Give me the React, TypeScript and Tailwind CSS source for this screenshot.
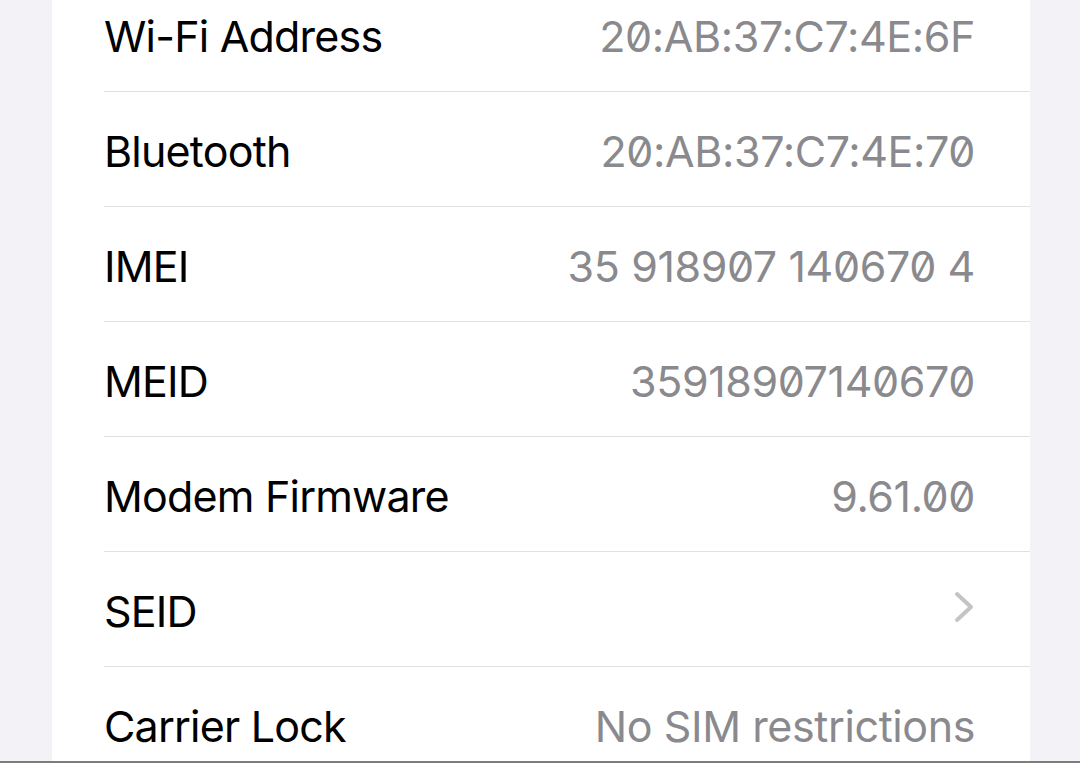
import React from "react";

interface InfoRow {
    label: string;
    value?: string;
    chevron?: boolean;
}

const rows: InfoRow[] = [
    { label: "Wi-Fi Address", value: "20:AB:37:C7:4E:6F" },
    { label: "Bluetooth", value: "20:AB:37:C7:4E:70" },
    { label: "IMEI", value: "35 918907 140670 4" },
    { label: "MEID", value: "35918907140670" },
    { label: "Modem Firmware", value: "9.61.00" },
    { label: "SEID", chevron: true },
    { label: "Carrier Lock", value: "No SIM restrictions" },
];

function Chevron() {
    return (
        <svg width="22" height="34" viewBox="0 0 22 34" fill="none" className="mb-[8px]">
            <path d="M4 4 L18 17 L4 30" stroke="#c4c4c7" strokeWidth="4" strokeLinecap="round" strokeLinejoin="round" />
        </svg>
    );
}

function Row({ row }: { row: InfoRow }) {
    return (
        <div className="ml-[52px] h-[115px] shrink-0 box-border flex items-center justify-between pr-[55px] pt-[4px] border-b border-[#e1e1e4]">
            <span className="text-[43px] text-black tracking-[-0.8px]">{row.label}</span>
            {row.chevron ? (
                <Chevron />
            ) : (
                <span className="text-[43px] text-[#8a8a8e] tracking-[-0.4px] slashed-zero">{row.value}</span>
            )}
        </div>
    );
}

export default function App() {
    return (
        <div className="h-[763px] w-full flex flex-col bg-[#f2f2f7] overflow-hidden" style={{ fontFamily: "Inter, 'Liberation Sans', sans-serif" }}>
            <div className="flex-1 min-h-0 overflow-hidden">
                <div className="ml-[52px] w-[978px] mt-[-23px] bg-white flex flex-col">
                    {rows.map((row) => (
                        <Row key={row.label} row={row} />
                    ))}
                </div>
            </div>
            {/* bottom edge of the screenshot */}
            <div className="h-[2px] bg-[#7d7d7d] shrink-0" />
        </div>
    );
}
